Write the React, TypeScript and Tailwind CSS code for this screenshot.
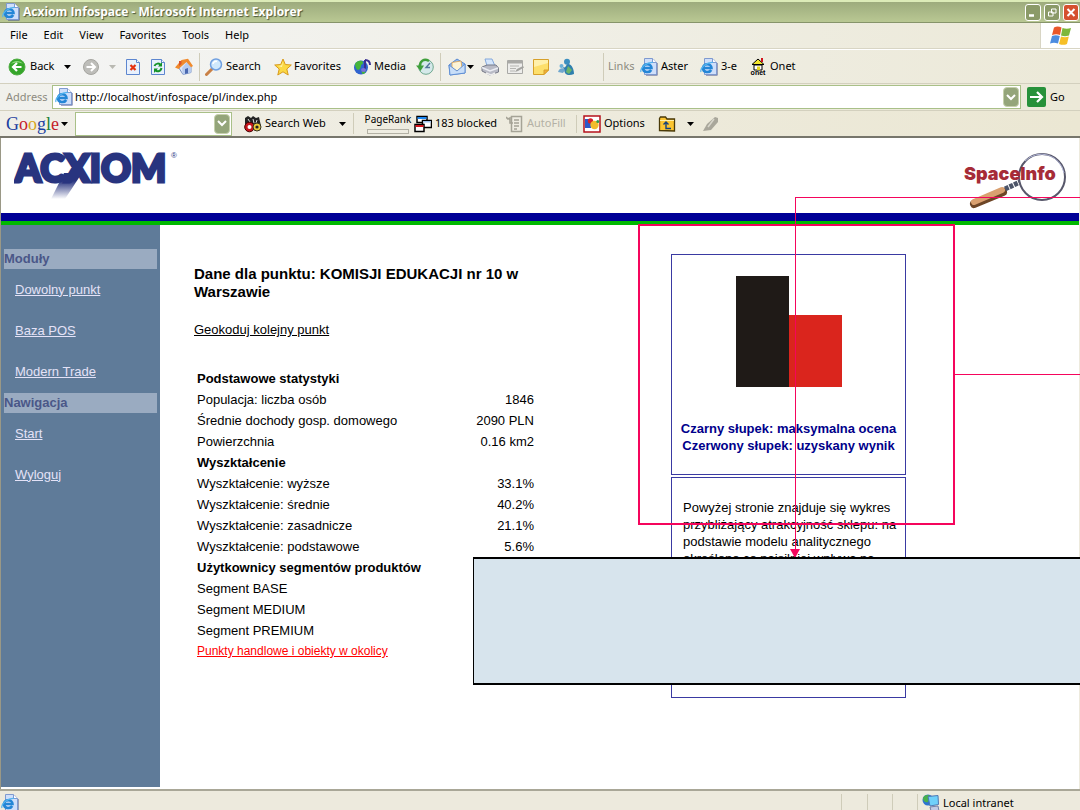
import type { ReactNode } from "react";

const menuItems = ["File", "Edit", "View", "Favorites", "Tools", "Help"];

const modules = ["Dowolny punkt", "Baza POS", "Modern Trade"];
const navigation = ["Start", "Wyloguj"];

const stats = [
  {
    title: "Podstawowe statystyki",
    rows: [
      ["Populacja: liczba osób", "1846"],
      ["Średnie dochody gosp. domowego", "2090 PLN"],
      ["Powierzchnia", "0.16 km2"],
    ],
  },
  {
    title: "Wyszktałcenie",
    rows: [
      ["Wyszktałcenie: wyższe", "33.1%"],
      ["Wyszktałcenie: średnie", "40.2%"],
      ["Wyszktałcenie: zasadnicze", "21.1%"],
      ["Wyszktałcenie: podstawowe", "5.6%"],
    ],
  },
  {
    title: "Użytkownicy segmentów produktów",
    rows: [
      ["Segment BASE", ""],
      ["Segment MEDIUM", ""],
      ["Segment PREMIUM", ""],
    ],
  },
];

/* ---------- icons ---------- */

const Icon = ({ children, size = 18 }: { children: ReactNode; size?: number }) => (
  <svg width={size} height={size} viewBox="0 0 18 18" className="shrink-0" aria-hidden="true">
    {children}
  </svg>
);

const IeIcon = () => (
  <Icon>
    <path d="M6 1.500h8l3.500 4v12H6z" fill="#44508c" />
    <path d="M4.500 .5h8l4 4v12h-12z" fill="#cfdffa" stroke="#7f9ad0" />
    <path d="M12.500 .5v4h4" fill="#fff" stroke="#7f9ad0" />
    <path d="M3 10h8.500C11.500 5 3 5 3 10c0 5 6.500 5 8.200 2" fill="none" stroke="#2486d6" strokeWidth="2.600" />
    <path d="M1 14C-.5 10 7 4 13 4.500" fill="none" stroke="#54b4ee" strokeWidth="1.200" />
  </Icon>
);

const Caret = ({ color = "#000" }: { color?: string }) => (
  <svg width="7" height="4" viewBox="0 0 7 4" className="shrink-0" aria-hidden="true">
    <path d="M0 0h7L3.500 4z" fill={color} />
  </svg>
);

const BackIcon = () => (
  <Icon>
    <circle cx="9" cy="9" r="8" fill="#35a52a" stroke="#4fae43" />
    <path d="M3 6a7 6 0 0 1 12 0c-3-2-8-2-12 0z" fill="#8fdc7c" />
    <path d="M13.500 9H5.500M9 5L5 9l4 4" fill="none" stroke="#fff" strokeWidth="2.200" />
  </Icon>
);

const ForwardIcon = () => (
  <Icon>
    <circle cx="9" cy="9" r="7.500" fill="#bdbdb9" stroke="#a5a5a0" />
    <path d="M4.500 9h8M9 5l4 4-4 4" fill="none" stroke="#fff" strokeWidth="2" />
  </Icon>
);

const StopIcon = () => (
  <Icon>
    <path d="M2.500 1.500h10l3 3v12h-13z" fill="#e8f1fd" stroke="#5d86cf" />
    <path d="M12.500 1.500v3h3" fill="#fff" stroke="#5d86cf" />
    <path d="M6.500 7l5 5M11.500 7l-5 5" stroke="#e53212" strokeWidth="2.200" />
  </Icon>
);

const RefreshIcon = () => (
  <Icon>
    <path d="M2.500 1.500h10l3 3v12h-13z" fill="#e8f1fd" stroke="#5d86cf" />
    <path d="M12.500 1.500v3h3" fill="#fff" stroke="#5d86cf" />
    <path d="M5.500 8c1-3 5-3 6-1M12.500 10c-1 4-5 4-6 2" fill="none" stroke="#15932a" strokeWidth="2" />
    <path d="M13 4v4.500H9zM5 15v-4.500h4z" fill="#15932a" />
  </Icon>
);

const HomeIcon = () => (
  <Icon>
    <path d="M3 8.500L8 16.500l8-2V8L11 3z" fill="#dce6f8" stroke="#7d95c4" />
    <path d="M8 16.500l8-2V8l-4-4-5 6z" fill="#b7cbee" />
    <path d="M0 9.500L6.500 2 13 .8 18 8l-2 1.200L11.500 4 3.500 11z" fill="#f08a2c" />
    <path d="M4 3h2.500v3L4 8z" fill="#d9542b" />
    <path d="M10 11l3-1v5.300l-3 .8z" fill="#4a68b0" />
  </Icon>
);

const SearchIcon = () => (
  <Icon>
    <path d="M1.500 16.500L7 11" stroke="#c98046" strokeWidth="3" strokeLinecap="round" />
    <circle cx="11" cy="6.500" r="5.500" fill="#cfe8fc" stroke="#6f9fe0" strokeWidth="1.500" />
    <path d="M8 6c0-2 2-3 4-2.500" fill="none" stroke="#fff" strokeWidth="1.500" />
  </Icon>
);

const StarIcon = () => (
  <Icon>
    <path
      d="M9 1l2.300 5.500 6 .5-4.500 4 1.400 6L9 13.800 3.800 17l1.400-6L.7 7l6-.5z"
      fill="#fbd944"
      stroke="#d89a1c"
    />
    <path d="M9 3.500L7.500 7.500 4 8l4 1z" fill="#fff6b8" />
  </Icon>
);

const MediaIcon = () => (
  <Icon>
    <circle cx="8" cy="9.500" r="7" fill="#2f63cf" />
    <path d="M2 6c2-4 7-4 8-2 1 2-2 2-2 4s-2 4-3 4-3-3-3-6z" fill="#45b53b" />
    <path d="M9 12c3-1 4 0 3 3-2 2-4 1-3-3z" fill="#45b53b" />
    <path d="M12 2v9M12 2c2 0 5 1 5 5" fill="none" stroke="#3a2f92" strokeWidth="2" />
    <ellipse cx="10.500" cy="12" rx="2.500" ry="2" fill="#7a70d8" />
  </Icon>
);

const HistoryIcon = () => (
  <Icon>
    <circle cx="10" cy="9" r="7.300" fill="#d5e9ea" stroke="#6fa890" />
    <path d="M14 5l-4 4.500h4" fill="none" stroke="#54789a" strokeWidth="1.400" />
    <path d="M13 3C8 0 4 3 4 8" fill="none" stroke="#3f9f3a" strokeWidth="2.400" />
    <path d="M0 7.500h8L4.500 13z" fill="#3f9f3a" />
  </Icon>
);

const MailIcon = () => (
  <Icon>
    <path d="M1 7l8-6 8 5v9L2 17z" fill="#8fb8ee" stroke="#5b8bd2" />
    <path d="M4 4.500L13 3l1 7-5 3-5-3z" fill="#fdf4d6" stroke="#e0a24c" strokeWidth=".8" />
    <path d="M1 7l8 6 8-7v9L2 17z" fill="#c8def8" stroke="#5b8bd2" strokeWidth=".9" />
  </Icon>
);

const PrinterIcon = () => (
  <Icon>
    <path d="M4 1h7l3 7H6z" fill="#d4e6fc" stroke="#84a8dc" />
    <path d="M1 9l5-2h9l2.500 3v4L9 17l-8-4z" fill="#b9bbc6" stroke="#777a88" />
    <path d="M1 9.500l8 3.500 8-3" fill="none" stroke="#eceef4" strokeWidth="1.400" />
    <path d="M5 15l5 2 4-2" fill="none" stroke="#eee" strokeWidth="1.500" />
  </Icon>
);

const EditIcon = () => (
  <Icon>
    <path d="M1.500 2.500h15v13h-15z" fill="#ededeb" stroke="#a9a9a6" />
    <path d="M2 3h14v2.500H2z" fill="#a9a9a6" />
    <path d="M4 8h9M4 10.500h6M4 13h5" stroke="#b5b5b2" />
    <path d="M9 14l2-3 6-3 1 1.500-6 3.500z" fill="#a3a3a0" />
  </Icon>
);

const NoteIcon = () => (
  <Icon>
    <path d="M1.500 1.500h15V12l-4.500 4.500H1.500z" fill="#fddf6b" stroke="#d6a02a" />
    <path d="M2 2h14v3L2 9z" fill="#fff0ab" />
    <path d="M16.500 12H12v4.500z" fill="#f3ae3b" stroke="#d6a02a" />
  </Icon>
);

const MessengerIcon = () => (
  <Icon>
    <circle cx="10" cy="3.800" r="3" fill="#3b8fc0" />
    <path d="M6 9c3 2 3-3 5-3 4 0 6 6 6 10-4 2-8 1-9-1z" fill="#2f7fae" />
    <path d="M11 8l4 4-3 4-3-2z" fill="#6cb56b" />
    <circle cx="4.500" cy="8" r="2" fill="#69b0d8" />
    <path d="M1 14c1-4 5-5 7-2l-2 3z" fill="#6fa7cf" />
  </Icon>
);

const OnetIcon = () => (
  <svg width="16" height="18" viewBox="0 0 16 18" className="shrink-0" aria-hidden="true">
    <path d="M2 6.500L8 1l6 5.500z" fill="#f4e52c" stroke="#000" />
    <path d="M11 0h2v4h-2z" fill="#d1121a" />
    <path d="M4 7h8v5H4z" fill="#fff" stroke="#000" />
    <path d="M7 8.500h3V12H7z" fill="#e6d61e" />
    <text x="8" y="17" textAnchor="middle" fontSize="7" fontWeight="700" fontFamily="Liberation Sans, sans-serif">
      onet
    </text>
  </svg>
);

const BinocularsIcon = () => (
  <Icon>
    <path d="M1 3l3-2 3 2 2-2 3 2 3-1 2 9H1z" fill="#222" />
    <path d="M4 4l2 3M9 4l1 4M13 5l-1 3" stroke="#ddd" />
    <circle cx="5.500" cy="12" r="4.800" fill="#c5161c" stroke="#400" />
    <circle cx="5.500" cy="12" r="2" fill="#fff" />
    <circle cx="13" cy="12" r="4" fill="#ecc93b" stroke="#332" />
    <circle cx="13" cy="12" r="1.600" fill="#222" />
  </Icon>
);

const PopupIcon = () => (
  <Icon>
    <path d="M3 1.500h10v6H3z" fill="#fff" stroke="#000" strokeWidth="1.500" />
    <path d="M3.500 2h9v2h-9z" fill="#1a86f0" />
    <path d="M8.500 5.500h9v7h-9z" fill="#fff" stroke="#000" strokeWidth="1.500" />
    <path d="M9 6h8v1.500H9z" fill="#9ec3ee" />
    <path d="M1 9.500h9v7H1z" fill="#fff" stroke="#000" strokeWidth="1.500" />
    <path d="M1.500 10h8v2h-8z" fill="#d4141c" />
  </Icon>
);

const AutoFillIcon = () => (
  <Icon>
    <path d="M5.500 1.500h10v15h-10z" fill="#efede2" stroke="#a5a396" strokeWidth="1.500" />
    <path d="M8 5h5M8 8h5M8 11h5M8 14h3" stroke="#a5a396" strokeWidth="1.300" />
    <path d="M0 2l2 2 2-1v5h3" fill="none" stroke="#a5a396" strokeWidth="1.600" />
  </Icon>
);

const OptionsIcon = () => (
  <Icon>
    <path d="M1 1h16v16H1z" fill="#fff" stroke="#b5121c" strokeWidth="1.500" />
    <path d="M2 4h6v9H2z" fill="#2a58c8" />
    <circle cx="7.500" cy="6" r="2.700" fill="#d6202a" />
    <circle cx="11.500" cy="10" r="4.200" fill="#f2bc2c" />
    <circle cx="14.800" cy="6.500" r="1.500" fill="#2d9c4a" />
  </Icon>
);

const FolderUpIcon = () => (
  <Icon>
    <path d="M1.500 15.500v-12l1-1.500h5l1.500 2h7.500v12z" fill="#fcc530" stroke="#4a3a08" strokeWidth="1.300" />
    <path d="M2 5.500h14" stroke="#fff0a8" />
    <path d="M8 7v6.500h5M5.500 9.500L8 7l2.500 2.500" fill="none" stroke="#14417c" strokeWidth="1.400" />
  </Icon>
);

const MarkerIcon = () => (
  <Icon>
    <path d="M1 16l4-7 8-7 3 1v4l-7 8z" fill="#a9a79b" />
    <path d="M6 12l6-8" stroke="#d8d6cb" strokeWidth="1.500" />
  </Icon>
);

const WindowsFlag = () => (
  <svg width="22" height="20" viewBox="0 0 22 20" aria-hidden="true">
    <path d="M4 1.500c3-1.500 5-1 7.500 0L10 9C7.500 8 5 8 2 9z" fill="#e9572a" />
    <path d="M12.500 2c3 1 5.500 1 8.500 0l-2 7.500c-3 1-5 1-8 0z" fill="#7db73a" />
    <path d="M2 10c3-1.200 5-1 7.800 0L8 17.500c-3-1-5-1-8 0z" fill="#4c8ce0" />
    <path d="M11 10.500c3 1 5 1 7.800 0L17 18c-3 1.300-5 1-8 0z" fill="#f6bf26" />
  </svg>
);

const IntranetIcon = () => (
  <Icon>
    <circle cx="6" cy="6" r="5.500" fill="#2d74d0" />
    <path d="M1 4c2-4 6-3 7-2L6 8c-3 1-5-1-5-4z" fill="#49b04b" />
    <path d="M6 2.500l10-1 .5 9L8 12z" fill="#6fd0fa" stroke="#5078b4" />
    <path d="M8 13l8-1 1 5H9z" fill="#c3cbe4" stroke="#7581a8" />
  </Icon>
);

const AcxiomLogo = () => (
  <svg width="166" height="52" viewBox="0 0 166 52" role="img" aria-label="Acxiom">
    <defs>
      <linearGradient id="tail" x1="0" y1="0" x2="0" y2="1">
        <stop offset="0.3" stopColor="#28347f" />
        <stop offset="1" stopColor="#fff" />
      </linearGradient>
    </defs>
    <path d="M50 22h18L51 48H37z" fill="url(#tail)" />
    <text x="1" y="31" fontSize="37" fontWeight="900" fontFamily="Lato, sans-serif" fill="#28347f" stroke="#28347f" strokeWidth="3">
      ACXIOM
    </text>
    <text x="157" y="7" fontSize="8" fontFamily="Liberation Sans, sans-serif" fill="#28347f">
      ®
    </text>
  </svg>
);

const SpaceInfoLogo = () => (
  <svg width="104" height="58" viewBox="0 0 104 58" role="img" aria-label="SpaceInfo">
    <path d="M11 53l29-12" stroke="#6d4526" strokeWidth="8" strokeLinecap="round" />
    <path d="M11 51l28-12" stroke="#d9a070" strokeWidth="6" strokeLinecap="round" />
    <path d="M42 38l15-7" stroke="#4c5468" strokeWidth="5" strokeDasharray="4 1" />
    <circle cx="79" cy="26" r="23" fill="#fff" stroke="#57576a" strokeWidth="2" />
    <path d="M62 10a23 23 0 0 1 39 12" fill="none" stroke="#b4b8d8" />
    <text x="1" y="29" fontSize="18" fontWeight="900" fontFamily="Inter, sans-serif" fill="#a62c37">
      SpaceInfo
    </text>
  </svg>
);

/* ---------- browser chrome ---------- */

const ToolButton = ({ className, children }: { className: string; children: ReactNode }) => (
  <button type="button" className={`flex shrink-0 items-center whitespace-nowrap ${className}`}>
    {children}
  </button>
);

const Separator = () => <div className="h-7 w-px shrink-0 bg-[#cfccb9]" />;

const DropButton = ({ label }: { label: string }) => (
  <button
    type="button"
    aria-label={label}
    className="flex h-5 w-4 shrink-0 items-center justify-center rounded-sm border border-[#c5d0ab] bg-[#94a57a]"
  >
    <svg width="10" height="7" viewBox="0 0 10 7">
      <path d="M1 1l4 4 4-4" fill="none" stroke="#fff" strokeWidth="2" />
    </svg>
  </button>
);

const TitleBar = () => (
  <header className="flex h-[23px] items-center justify-between border-t-2 border-b border-t-[#dcebb8] border-b-[#86946a] bg-linear-to-b from-[#9dab7d] to-[#b9c893] pr-px pl-[2px]">
    <div className="flex items-center gap-[3px]">
      <IeIcon />
      <h1 className="font-['Open_Sans'] text-[12px] font-bold text-white [text-shadow:1px_1px_1px_#4b5638]">
        Acxiom Infospace - Microsoft Internet Explorer
      </h1>
    </div>
    <div className="flex gap-[3px]">
      <button type="button" aria-label="Minimize" className="h-[17px] w-4 rounded-[3px] border border-white bg-[#8b9a68]">
        <svg width="14" height="15" viewBox="0 0 14 15">
          <path d="M3 10.500h5" stroke="#fff" strokeWidth="2.500" />
        </svg>
      </button>
      <button type="button" aria-label="Restore" className="h-[17px] w-4 rounded-[3px] border border-white bg-[#8b9a68]">
        <svg width="14" height="15" viewBox="0 0 14 15">
          <path d="M6.500 4h4.500v4H6.500zM3.500 7h4.500v4H3.500z" fill="#8b9a68" stroke="#fff" />
        </svg>
      </button>
      <button type="button" aria-label="Close" className="h-[17px] w-4 rounded-[3px] border border-white bg-[#d5512f]">
        <svg width="14" height="15" viewBox="0 0 14 15">
          <path d="M3.500 4l7 7M10.500 4l-7 7" stroke="#fff" strokeWidth="2" />
        </svg>
      </button>
    </div>
  </header>
);

const MenuBar = () => (
  <nav className="flex h-[26px] items-stretch border-b border-[#d8d5c4] bg-linear-to-r from-[#f4f5f5] to-[#ece9d8]">
    <div className="flex flex-1 items-center gap-4 pl-[10px]">
      {menuItems.map((item) => (
        <button key={item} type="button">
          {item}
        </button>
      ))}
    </div>
    <div className="flex w-10 items-center justify-center border-l border-[#d8d5c4] bg-white">
      <WindowsFlag />
    </div>
  </nav>
);

const ToolBar = () => (
  <div className="flex h-[35px] items-center border-t border-b border-t-white border-b-[#d3d0be] bg-linear-to-r from-[#f4f5f5] to-[#ece9d8] pl-2">
    <ToolButton className="w-[74px] gap-1">
      <BackIcon />
      <span className="w-[30px] text-left">Back</span>
      <Caret />
    </ToolButton>
    <ToolButton className="w-[42px] justify-between pr-2">
      <ForwardIcon />
      <Caret color="#b9b9b2" />
    </ToolButton>
    <ToolButton className="w-[25px]"><StopIcon /></ToolButton>
    <ToolButton className="w-[26px]"><RefreshIcon /></ToolButton>
    <ToolButton className="w-6"><HomeIcon /></ToolButton>
    <Separator />
    <ToolButton className="w-[74px] gap-[3px] pl-[5px]">
      <SearchIcon />
      Search
    </ToolButton>
    <ToolButton className="w-[79px] gap-[2px]">
      <StarIcon />
      Favorites
    </ToolButton>
    <ToolButton className="w-[63px] gap-[3px]">
      <MediaIcon />
      Media
    </ToolButton>
    <ToolButton className="w-6"><HistoryIcon /></ToolButton>
    <Separator />
    <ToolButton className="w-10 gap-px pl-[7px]">
      <MailIcon />
      <Caret />
    </ToolButton>
    <ToolButton className="w-[25px]"><PrinterIcon /></ToolButton>
    <ToolButton className="w-[26px]"><EditIcon /></ToolButton>
    <ToolButton className="w-[25px]"><NoteIcon /></ToolButton>
    <ToolButton className="w-[46px]"><MessengerIcon /></ToolButton>
    <Separator />
    <span className="w-8 shrink-0 pl-1 text-[#8d8b80]">Links</span>
    <a href="#aster" className="flex w-[60px] shrink-0 items-center gap-[3px] pl-1"><IeIcon />Aster</a>
    <a href="#3-e" className="flex w-[54px] shrink-0 items-center gap-[3px] pl-1"><IeIcon />3-e</a>
    <a href="#onet" className="flex shrink-0 items-center gap-1"><OnetIcon />Onet</a>
  </div>
);

const AddressBar = () => (
  <form
    className="flex h-[27px] items-center border-b border-[#d3d0be] bg-linear-to-r from-[#f1f1ec] to-[#ece9d8]"
    onSubmit={(e) => e.preventDefault()}
  >
    <label htmlFor="address" className="w-[52px] pl-[6px] text-[#8d8b80]">
      Address
    </label>
    <div className="flex h-6 flex-1 items-center gap-[2px] border border-[#a9c088] bg-white pr-px pl-[2px]">
      <IeIcon />
      <input
        id="address"
        defaultValue="http://localhost/infospace/pl/index.php"
        className="min-w-0 flex-1 bg-transparent outline-none"
      />
      <DropButton label="Address history" />
    </div>
    <button type="submit" className="flex w-[59px] items-center gap-1 pl-[6px]">
      <svg width="19" height="20" viewBox="0 0 19 20">
        <rect width="19" height="20" rx="2" fill="#27913a" />
        <path d="M3 10h12M10 5l5 5-5 5" fill="none" stroke="#fff" strokeWidth="2.200" />
      </svg>
      Go
    </button>
  </form>
);

const GoogleBar = () => (
  <div className="flex h-[27px] items-center border-b-2 border-[#77766c] bg-linear-to-r from-[#f0efe8] to-[#ebe7d3] pl-[6px]">
    <button type="button" className="flex w-[69px] items-center gap-[2px]">
      <span className="font-['Liberation_Serif'] text-[18px] leading-5">
        <span className="text-[#1c3fa0]">G</span>
        <span className="text-[#c4202a]">o</span>
        <span className="text-[#d8a51c]">o</span>
        <span className="text-[#1c3fa0]">g</span>
        <span className="text-[#20813a]">l</span>
        <span className="text-[#c4202a]">e</span>
      </span>
      <Caret />
    </button>
    <div className="flex h-6 w-[157px] items-center border border-[#a9c088] bg-white pr-px">
      <input aria-label="Google search" className="min-w-0 flex-1 bg-transparent outline-none" />
      <DropButton label="Search history" />
    </div>
    <ToolButton className="w-[121px] gap-[3px] pl-3">
      <BinocularsIcon />
      <span className="w-[71px] text-left">Search Web</span>
      <Caret />
    </ToolButton>
    <div className="flex w-[61px] flex-col items-center gap-1 border-l border-[#cfccb9] pl-2 text-[10px] leading-3">
      PageRank
      <div className="h-[5px] w-[42px] border border-[#b3b1a5] bg-[#efede2]" />
    </div>
    <ToolButton className="w-[92px] gap-[3px]">
      <PopupIcon />
      183 blocked
    </ToolButton>
    <ToolButton className="w-[70px] gap-[3px] text-[#b3b1a5]">
      <AutoFillIcon />
      AutoFill
    </ToolButton>
    <ToolButton className="w-[82px] gap-[3px] border-l border-[#cfccb9] pl-[6px]">
      <OptionsIcon />
      Options
    </ToolButton>
    <ToolButton className="w-11 justify-between pr-2">
      <FolderUpIcon />
      <Caret />
    </ToolButton>
    <ToolButton className="w-6"><MarkerIcon /></ToolButton>
  </div>
);

/* ---------- page ---------- */

const SideSection = ({ title, links }: { title: string; links: string[] }) => (
  <section>
    <h2 className="mx-[3px] h-5 bg-[#9aabc1] text-[13px] leading-5 font-bold text-[#4a5788]">{title}</h2>
    <ul>
      {links.map((link) => (
        <li key={link} className="flex h-[41px] items-center pl-[14px]">
          <a href="#" className="text-[13px] text-[#e4e2f7] underline">
            {link}
          </a>
        </li>
      ))}
    </ul>
  </section>
);

const StatsTable = () => (
  <table className="mt-[29px] ml-[3px] w-[337px] text-[13px] leading-[21px]">
    {stats.map((group) => (
      <tbody key={group.title}>
        <tr>
          <th colSpan={2} className="text-left font-bold">
            {group.title}
          </th>
        </tr>
        {group.rows.map(([label, value]) => (
          <tr key={label}>
            <td>{label}</td>
            <td className="text-right">{value}</td>
          </tr>
        ))}
      </tbody>
    ))}
  </table>
);

const RatingCards = () => (
  <div className="flex w-[235px] shrink-0 flex-col gap-[2px] pt-[29px] text-[13px] leading-[17px]">
    <div className="flex h-[221px] flex-col items-center border border-[#3a3aa2]">
      <svg width="106" height="111" viewBox="0 0 106 111" className="mt-[21px]" role="img" aria-label="Wykres oceny">
        <rect width="53" height="111" fill="#1f1a17" />
        <rect x="53" y="39" width="53" height="72" fill="#da251d" />
      </svg>
      <p className="mt-[33px] text-center font-bold whitespace-nowrap text-[#00008b]">
        Czarny słupek: maksymalna ocena
        <br />
        Czerwony słupek: uzyskany wynik
      </p>
    </div>
    <div className="h-[221px] border border-[#3a3aa2] pt-[21px] pl-[11px] whitespace-nowrap">
      <p>
        Powyżej stronie znajduje się wykres
        <br />
        przybliżający atrakcyjność sklepu: na
        <br />
        podstawie modelu analitycznego
        <br />
        określono co najsilniej wpływa na
      </p>
    </div>
  </div>
);

/* Callout shapes laid over the page */
const Callouts = () => (
  <>
    <div className="absolute top-[224px] left-[638px] h-[301px] w-[317px] border-2 border-[#f5055c]" />
    <div className="absolute top-[374px] right-0 left-[955px] h-px bg-[#f5055c]" />
    <div className="absolute top-[197px] right-0 left-[795px] h-px bg-[#f5055c]" />
    <div className="absolute top-[197px] left-[795px] h-[354px] w-px bg-[#f5055c]" />
    <svg width="10" height="9" viewBox="0 0 10 9" className="absolute top-[549px] left-[790px]">
      <path d="M0 0h10L5 9z" fill="#f5055c" />
    </svg>
    <div className="absolute top-[557px] right-0 left-[473px] h-32 border-y-2 border-l border-black bg-[#d7e4ed]" />
  </>
);

const StatusBar = () => (
  <footer className="flex h-[21px] items-start overflow-hidden border-t-2 border-[#a9a797] bg-[#edeadd] pt-[3px] pl-px">
    <IeIcon />
    <div className="ml-auto flex h-full">
      <div className="w-[26px] border-l border-[#cfccb9]" />
      <div className="w-[25px] border-l border-[#cfccb9]" />
      <div className="w-[25px] border-l border-[#cfccb9]" />
      <div className="flex w-[163px] items-start gap-[3px] border-l border-[#cfccb9] pl-1">
        <IntranetIcon />
        <span className="leading-[18px]">Local intranet</span>
      </div>
    </div>
  </footer>
);

const App = () => (
  <div className="relative flex min-h-screen flex-col overflow-hidden bg-white font-['Noto_Sans',sans-serif] text-[11px] text-black">
    <TitleBar />
    <MenuBar />
    <ToolBar />
    <AddressBar />
    <GoogleBar />

    <div className="flex flex-1 flex-col border-x border-l-[#9a9886] border-r-[#edeadd] font-['Liberation_Sans',sans-serif]">
      <div className="flex h-[75px] items-start justify-between pt-[13px] pr-3 pl-[13px]">
        <AcxiomLogo />
        <SpaceInfoLogo />
      </div>
      <div className="h-3 border-b-4 border-[#00b800] bg-[#000096]" />
      <div className="flex flex-1">
        <aside className="mb-[2px] flex w-[159px] shrink-0 flex-col gap-px bg-[#5f7b99] pt-6">
          <SideSection title="Moduły" links={modules} />
          <SideSection title="Nawigacja" links={navigation} />
        </aside>
        <main className="flex flex-1">
          <div className="w-[511px] shrink-0 pt-10 pl-[34px]">
            <h2 className="w-[350px] text-[15px] leading-[18px] font-bold">
              Dane dla punktu: KOMISJI EDUKACJI nr 10 w Warszawie
            </h2>
            <p className="mt-5 text-[13px] leading-[18px]">
              <a href="#" className="underline">Geokoduj kolejny punkt</a>
            </p>
            <StatsTable />
            <a href="#" className="ml-[3px] text-[12px] leading-[21px] text-[#f00] underline">
              Punkty handlowe i obiekty w okolicy
            </a>
          </div>
          <RatingCards />
        </main>
      </div>
    </div>

    <StatusBar />
    <Callouts />
  </div>
);

export default App;
